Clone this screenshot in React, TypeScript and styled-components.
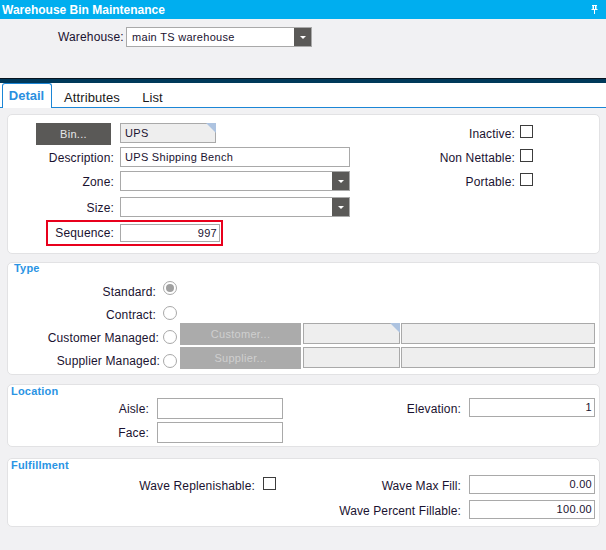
import React from "react";
import styled, { createGlobalStyle } from "styled-components";

const Global = createGlobalStyle`
  html, body { margin: 0; padding: 0; background: #f1f1f3; }
  body { font-family: "Liberation Sans", Arial, sans-serif; font-size: 12px; color: #1a1230; }
`;

const Page = styled.div`
  width: 606px;
  height: 550px;
  overflow: hidden;
  display: flex;
  flex-direction: column;
  background: #f1f1f3;
`;

const TitleBar = styled.div`
  height: 19px;
  flex: none;
  background: #00aeef;
  color: #fff;
  font-weight: bold;
  font-size: 12px;
  display: flex;
  align-items: center;
  justify-content: space-between;
  padding: 0 8px 0 2px;
`;

const HeaderArea = styled.div`
  height: 59px;
  box-sizing: border-box;
  flex: none;
  display: flex;
  align-items: flex-start;
  padding: 8px 0 0 58px;
  gap: 2px;
`;

const HeaderLabel = styled.label`
  width: 66px;
  white-space: nowrap;
  line-height: 20px;
  font-size: 12px;
  letter-spacing: 0.15px;
`;

const DarkBar = styled.div`
  height: 5px;
  box-sizing: border-box;
  flex: none;
  background: #00395a;
  border-top: 1px solid #06141f;
`;

const TabStrip = styled.div`
  height: 25px;
  box-sizing: border-box;
  flex: none;
  background: #fff;
  border-bottom: 1px solid #1c86d6;
  display: flex;
  align-items: stretch;
  padding-left: 2px;
`;

const ActiveTab = styled.div`
  width: 47px;
  height: 23px;
  box-sizing: content-box;
  border: 1px solid #1c86d6;
  border-bottom: none;
  border-radius: 3px 3px 0 0;
  background: #fff;
  color: #2a8fe0;
  font-weight: bold;
  font-size: 13px;
  display: flex;
  align-items: center;
  justify-content: center;
  padding: 0 1px 1px 0;
`;

const Tab = styled.div<{ $w: number }>`
  width: ${(p) => p.$w}px;
  font-size: 13px;
  letter-spacing: 0.1px;
  color: #1a1a1a;
  display: flex;
  align-items: center;
  justify-content: center;
  padding-top: 4px;
`;

const Body = styled.div`
  flex: 1;
  display: flex;
  flex-direction: column;
  padding: 6px 6px 0 7px;
`;

const Card = styled.section<{ $h: number; $mt?: number }>`
  height: ${(p) => p.$h}px;
  margin-top: ${(p) => p.$mt ?? 0}px;
  flex: none;
  box-sizing: border-box;
  background: #fff;
  border: 1px solid #e2e2e4;
  border-radius: 5px;
  display: flex;
  flex-direction: column;
`;

const DetailGrid = styled.div`
  display: flex;
  justify-content: space-between;
  padding: 8px 66px 0 0;
`;

const Column = styled.div`
  display: flex;
  flex-direction: column;
`;

const Row = styled.div<{ $h: number; $mt?: number }>`
  display: flex;
  align-items: flex-start;
  height: ${(p) => p.$h}px;
  margin-top: ${(p) => p.$mt ?? 0}px;
`;

const Label = styled.label<{ $w: number; $gap?: number; $lh?: number; $ls?: number }>`
  width: ${(p) => p.$w}px;
  margin-right: ${(p) => p.$gap ?? 6}px;
  flex: none;
  text-align: right;
  white-space: nowrap;
  font-size: 12px;
  letter-spacing: ${(p) => p.$ls ?? 0.15}px;
  line-height: ${(p) => p.$lh ?? 22}px;
`;

const BinCell = styled.div`
  width: 112px;
  flex: none;
  padding-left: 28px;
  box-sizing: border-box;
`;

const DarkButton = styled.button`
  width: 75px;
  height: 22px;
  padding: 0;
  border: none;
  background: #5a5957;
  color: #e8e8e8;
  font: 11px "Liberation Sans", Arial, sans-serif;
  letter-spacing: 0.3px;
`;

const GreyButton = styled.button`
  width: 121px;
  height: 22px;
  padding: 0;
  border: none;
  background: #ababab;
  color: #cfcfcf;
  font: 11px "Liberation Sans", Arial, sans-serif;
  letter-spacing: 0.3px;
  margin: 0 2px 0 3px;
  flex: none;
`;

const Input = styled.div<{ $w: number; $h: number; $num?: boolean; $ro?: boolean; $corner?: boolean; $ml?: number }>`
  width: ${(p) => p.$w}px;
  height: ${(p) => p.$h}px;
  margin-left: ${(p) => p.$ml ?? 0}px;
  box-sizing: border-box;
  flex: none;
  position: relative;
  border: 1px solid #a9a9a9;
  background: ${(p) => (p.$ro ? "#eeeeee" : "#fff")};
  font-size: 11px;
  letter-spacing: 0.3px;
  color: #1a1230;
  line-height: ${(p) => p.$h - 2}px;
  padding: 0 ${(p) => (p.$num ? 2 : 4)}px 0 4px;
  text-align: ${(p) => (p.$num ? "right" : "left")};
  ${(p) =>
    p.$corner
      ? `&::after { content: ""; position: absolute; top: -1px; right: -1px; border-style: solid; border-width: 0 10px 10px 0; border-color: transparent #adc3e0 transparent transparent; }`
      : ""}
`;

const SelectBox = styled.div<{ $w: number }>`
  width: ${(p) => p.$w}px;
  height: 20px;
  box-sizing: border-box;
  flex: none;
  border: 1px solid #a9a9a9;
  background: #fff;
  display: flex;
  justify-content: space-between;
  font-size: 11px;
  letter-spacing: 0.3px;
  line-height: 18px;
  padding-left: 5px;
  color: #1a1230;
`;

const Caret = styled.span`
  width: 17px;
  height: 18px;
  flex: none;
  background: #5a5957;
  display: flex;
  align-items: center;
  justify-content: center;
  &::before {
    content: "";
    border-style: solid;
    border-width: 3px 3px 0 3px;
    border-color: #fff transparent transparent transparent;
  }
`;

const HighlightRow = styled.div`
  display: flex;
  align-items: center;
  width: 177px;
  height: 26px;
  box-sizing: border-box;
  margin: 3px 0 0 38px;
  border: 2px solid #e8001c;
`;

const Check = styled.span<{ $mt?: number }>`
  width: 13px;
  height: 13px;
  flex: none;
  box-sizing: border-box;
  border: 1px solid #3c3c3c;
  background: #fff;
  margin-top: ${(p) => p.$mt ?? 2}px;
`;

const Radio = styled.span<{ $on?: boolean; $mt?: number }>`
  width: 14px;
  height: 14px;
  flex: none;
  box-sizing: border-box;
  border: 1px solid #a8a8a8;
  border-radius: 50%;
  background: #fff;
  margin-top: ${(p) => p.$mt ?? 0}px;
  display: flex;
  align-items: center;
  justify-content: center;
  &::after {
    content: "";
    display: ${(p) => (p.$on ? "block" : "none")};
    width: 8px;
    height: 8px;
    border-radius: 50%;
    background: #a0a0a0;
  }
`;

const SectionTitle = styled.h3<{ $h: number }>`
  margin: 0;
  height: ${(p) => p.$h}px;
  padding-left: 3px;
  font-size: 11px;
  line-height: 12px;
  font-weight: bold;
  letter-spacing: 0.2px;
  color: #2a94e4;
`;

const TypeTitle = styled(SectionTitle)`
  padding-left: 6px;
  line-height: 10px;
`;

const SplitRow = styled.div`
  display: flex;
  justify-content: space-between;
  padding-right: 4px;
`;

const PinIcon = () => (
  <svg width="7" height="9" viewBox="0 0 7 9" fill="none" aria-hidden="true">
    <path d="M1 0h5v1H5.500v3H6.500v1H.5V4h1V1H1z" fill="#fff" />
    <rect x="3" y="1" width="1" height="3" fill="#00aeef" />
    <rect x="3" y="5" width="1" height="4" fill="#fff" />
  </svg>
);

export default function App() {
  return (
    <Page>
      <Global />
      <TitleBar>
        <span>Warehouse Bin Maintenance</span>
        <PinIcon />
      </TitleBar>
      <HeaderArea>
        <HeaderLabel>Warehouse:</HeaderLabel>
        <SelectBox $w={186}>
          main TS warehouse
          <Caret />
        </SelectBox>
      </HeaderArea>
      <DarkBar />
      <TabStrip>
        <ActiveTab>Detail</ActiveTab>
        <Tab $w={80}>Attributes</Tab>
        <Tab $w={41}>List</Tab>
      </TabStrip>
      <Body>
        <Card $h={140}>
          <DetailGrid>
            <Column>
              <Row $h={22}>
                <BinCell>
                  <DarkButton>Bin...</DarkButton>
                </BinCell>
                <Input $w={96} $h={20} $ro $corner>UPS</Input>
              </Row>
              <Row $h={20} $mt={2}>
                <Label $w={106}>Description:</Label>
                <Input $w={230} $h={20}>UPS Shipping Bench</Input>
              </Row>
              <Row $h={20} $mt={4}>
                <Label $w={106}>Zone:</Label>
                <SelectBox $w={230}><span /><Caret /></SelectBox>
              </Row>
              <Row $h={20} $mt={6}>
                <Label $w={106}>Size:</Label>
                <SelectBox $w={230}><span /><Caret /></SelectBox>
              </Row>
              <HighlightRow>
                <Label $w={66} $lh={24}>Sequence:</Label>
                <Input $w={100} $h={18} $num>997</Input>
              </HighlightRow>
            </Column>
            <Column>
              <Row $h={24}>
                <Label $w={80} $gap={5}>Inactive:</Label>
                <Check />
              </Row>
              <Row $h={24}>
                <Label $w={80} $gap={5}>Non Nettable:</Label>
                <Check />
              </Row>
              <Row $h={24}>
                <Label $w={80} $gap={5}>Portable:</Label>
                <Check />
              </Row>
            </Column>
          </DetailGrid>
        </Card>

        <Card $h={113} $mt={8}>
          <TypeTitle $h={18}>Type</TypeTitle>
          <Row $h={25}>
            <Label $w={148} $gap={7}>Standard:</Label>
            <Radio $on />
          </Row>
          <Row $h={17}>
            <Label $w={148} $gap={7} $lh={18}>Contract:</Label>
            <Radio />
          </Row>
          <Row $h={22}>
            <Label $w={151} $gap={4} $lh={30}>Customer Managed:</Label>
            <Radio $mt={7} />
            <GreyButton>Customer...</GreyButton>
            <Input $w={97} $h={21} $ro $corner />
            <Input $w={194} $h={21} $ro $ml={1} />
          </Row>
          <Row $h={22} $mt={2}>
            <Label $w={152} $gap={3} $lh={28}>Supplier Managed:</Label>
            <Radio $mt={7} />
            <GreyButton>Supplier...</GreyButton>
            <Input $w={97} $h={21} $ro />
            <Input $w={194} $h={21} $ro $ml={1} />
          </Row>
        </Card>

        <Card $h={63} $mt={9}>
          <SectionTitle $h={13}>Location</SectionTitle>
          <SplitRow>
            <Column>
              <Row $h={21}>
                <Label $w={141} $gap={8}>Aisle:</Label>
                <Input $w={126} $h={21} />
              </Row>
              <Row $h={21} $mt={3}>
                <Label $w={141} $gap={8}>Face:</Label>
                <Input $w={126} $h={21} />
              </Row>
            </Column>
            <Row $h={20}>
              <Label $w={100} $gap={8}>Elevation:</Label>
              <Input $w={126} $h={19} $num>1</Input>
            </Row>
          </SplitRow>
        </Card>

        <Card $h={69} $mt={11}>
          <SectionTitle $h={16}>Fulfillment</SectionTitle>
          <SplitRow>
            <Row $h={20}>
              <Label $w={247} $gap={8}>Wave Replenishable:</Label>
              <Check />
            </Row>
            <Column>
              <Row $h={20}>
                <Label $w={140} $gap={8} $ls={0.08}>Wave Max Fill:</Label>
                <Input $w={126} $h={19} $num>0.00</Input>
              </Row>
              <Row $h={20} $mt={5}>
                <Label $w={140} $gap={8} $ls={0.1}>Wave Percent Fillable:</Label>
                <Input $w={126} $h={19} $num>100.00</Input>
              </Row>
            </Column>
          </SplitRow>
        </Card>
      </Body>
    </Page>
  );
}
